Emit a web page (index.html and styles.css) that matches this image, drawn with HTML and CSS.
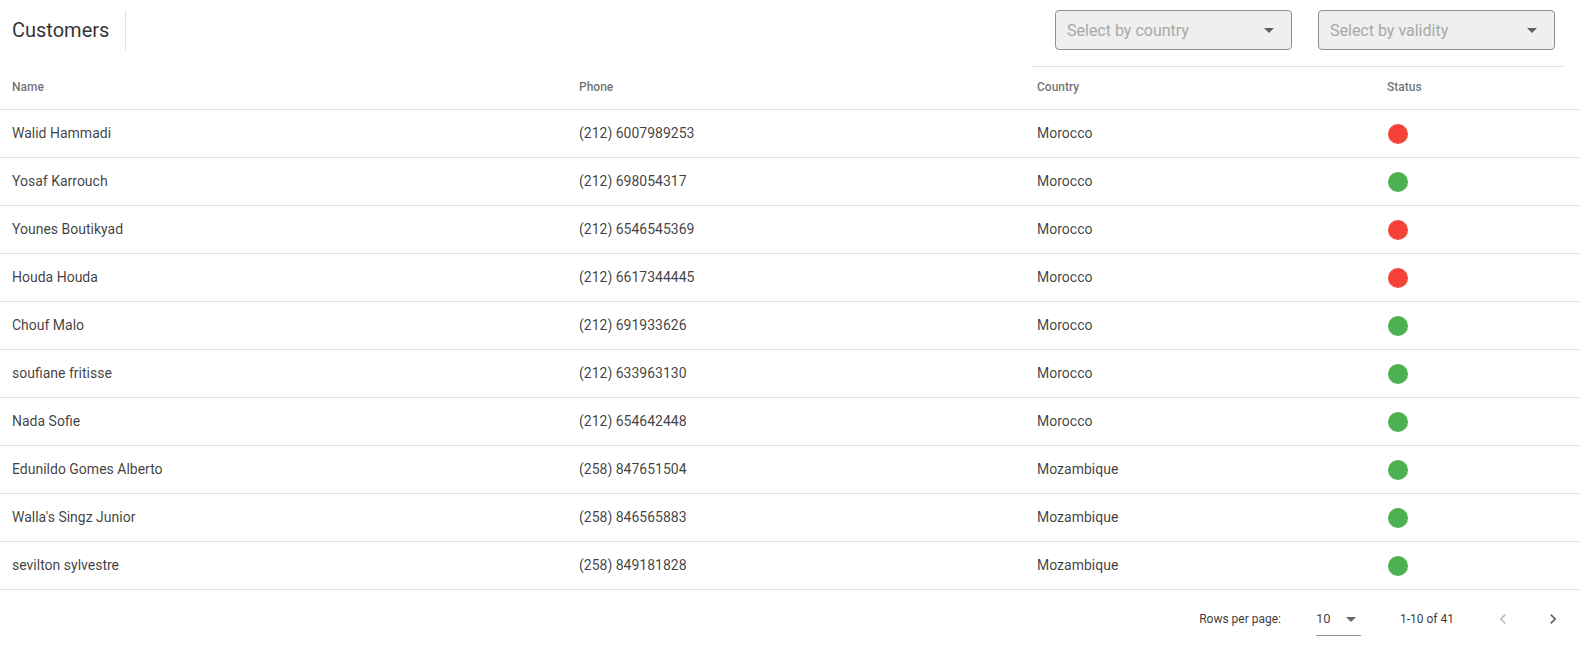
FILE: index.html
```html
<!DOCTYPE html>
<html>
<head>
<meta charset="utf-8">
<link rel="stylesheet" href="styles.css">
</head>
<body>
<div class="page">
  <div class="toolbar">
    <div class="title">Customers</div>
    <div class="filters">
      <div class="select"><span>Select by country</span><svg class="drop" viewBox="0 0 24 24"><path d="M7 10l5 5 5-5z"/></svg></div>
      <div class="select"><span>Select by validity</span><svg class="drop" viewBox="0 0 24 24"><path d="M7 10l5 5 5-5z"/></svg></div>
    </div>
  </div>
  <div class="topline"></div>
  <div class="table">
    <div class="row head">
      <div class="cell">Name</div><div class="cell">Phone</div><div class="cell">Country</div><div class="cell">Status</div>
    </div>
    <div class="row"><div class="cell">Walid Hammadi</div><div class="cell">(212) 6007989253</div><div class="cell">Morocco</div><div class="cell"><span class="dot bad"></span></div></div>
    <div class="row"><div class="cell">Yosaf Karrouch</div><div class="cell">(212) 698054317</div><div class="cell">Morocco</div><div class="cell"><span class="dot ok"></span></div></div>
    <div class="row"><div class="cell">Younes Boutikyad</div><div class="cell">(212) 6546545369</div><div class="cell">Morocco</div><div class="cell"><span class="dot bad"></span></div></div>
    <div class="row"><div class="cell">Houda Houda</div><div class="cell">(212) 6617344445</div><div class="cell">Morocco</div><div class="cell"><span class="dot bad"></span></div></div>
    <div class="row"><div class="cell">Chouf Malo</div><div class="cell">(212) 691933626</div><div class="cell">Morocco</div><div class="cell"><span class="dot ok"></span></div></div>
    <div class="row"><div class="cell">soufiane fritisse</div><div class="cell">(212) 633963130</div><div class="cell">Morocco</div><div class="cell"><span class="dot ok"></span></div></div>
    <div class="row"><div class="cell">Nada Sofie</div><div class="cell">(212) 654642448</div><div class="cell">Morocco</div><div class="cell"><span class="dot ok"></span></div></div>
    <div class="row"><div class="cell">Edunildo Gomes Alberto</div><div class="cell">(258) 847651504</div><div class="cell">Mozambique</div><div class="cell"><span class="dot ok"></span></div></div>
    <div class="row"><div class="cell">Walla's Singz Junior</div><div class="cell">(258) 846565883</div><div class="cell">Mozambique</div><div class="cell"><span class="dot ok"></span></div></div>
    <div class="row"><div class="cell">sevilton sylvestre</div><div class="cell">(258) 849181828</div><div class="cell">Mozambique</div><div class="cell"><span class="dot ok"></span></div></div>
  </div>
  <div class="pager">
    <span class="caption">Rows per page:</span>
    <div class="rpp"><span>10</span><svg class="drop small" viewBox="0 0 24 24"><path d="M7 10l5 5 5-5z"/></svg></div>
    <span class="caption range">1-10 of 41</span>
    <button class="nav disabled"><svg viewBox="0 0 24 24"><path d="M15.41 7.41L14 6l-6 6 6 6 1.41-1.41L10.83 12z"/></svg></button>
    <button class="nav"><svg viewBox="0 0 24 24"><path d="M10 6L8.59 7.41 13.17 12l-4.58 4.59L10 18l6-6z"/></svg></button>
  </div>
</div>
</body>
</html>
```

FILE: styles.css
```css
* { box-sizing: border-box; }
html, body { margin: 0; padding: 0; background: #fff; }
body { font-family: Roboto, "Noto Sans", sans-serif; color: rgba(0,0,0,0.76); }
.page { width: 1579px; }

.toolbar { display: flex; height: 66px; align-items: flex-start; }
.title {
  margin-top: 10px; height: 40px; line-height: 40px;
  padding-left: 12px; padding-right: 16px;
  border-right: 1px solid #e0e0e0;
  font-size: 20px; color: rgba(0,0,0,0.82);
}
.filters { margin-left: auto; display: flex; gap: 26px; margin-right: 24px; margin-top: 10px; }
.select {
  width: 237px; height: 40px; background: #efefef;
  border: 1px solid #8f8f8f; border-radius: 4px;
  display: flex; align-items: center; padding-left: 11px; position: relative;
  font-size: 16px; color: #a8a8a8;
}
.drop { width: 24px; height: 24px; fill: rgba(0,0,0,0.6); position: absolute; right: 10px; top: 7px; }

.topline { height: 0; border-top: 1px solid #e0e0e0; margin-left: 1031px; margin-right: 16px; }

.row {
  display: grid; grid-template-columns: 567px 458px 350px 204px;
  height: 48px; border-bottom: 1px solid #e0e0e0; align-items: center;
}
.row.head { height: 43px; }
.cell { padding-left: 12px; padding-bottom: 1px; font-size: 14px; display: flex; align-items: center; }
.head .cell { font-size: 12px; font-weight: 500; color: rgba(0,0,0,0.58); padding-bottom: 3px; }
.dot { width: 20px; height: 20px; border-radius: 50%; display: inline-block; margin-left: 1px; margin-top: 2px; }
.dot.ok { background: #4caf50; }
.dot.bad { background: #f44336; }

.pager { display: flex; justify-content: flex-end; align-items: center; height: 59px; padding-right: 2px; padding-bottom: 1px; }
.caption { font-size: 12px; color: rgba(0,0,0,0.8); }
.rpp {
  margin-left: 35px; width: 45px; height: 30px; position: relative;
  border-bottom: 1px solid rgba(0,0,0,0.42);
  font-size: 13px; display: flex; align-items: center; margin-top: 3px;
}
.rpp span { margin-top: -3px; }
.drop.small { right: -2px; top: 1px; }
.range { margin-left: 39px; margin-right: 25px; }
.nav { width: 48px; height: 48px; border: 0; background: none; padding: 0; display: flex; align-items: center; justify-content: center; }
.nav + .nav { margin-left: 2px; }
.nav svg { width: 20px; height: 20px; fill: rgba(0,0,0,0.6); }
.nav.disabled svg { fill: rgba(0,0,0,0.26); }
```
